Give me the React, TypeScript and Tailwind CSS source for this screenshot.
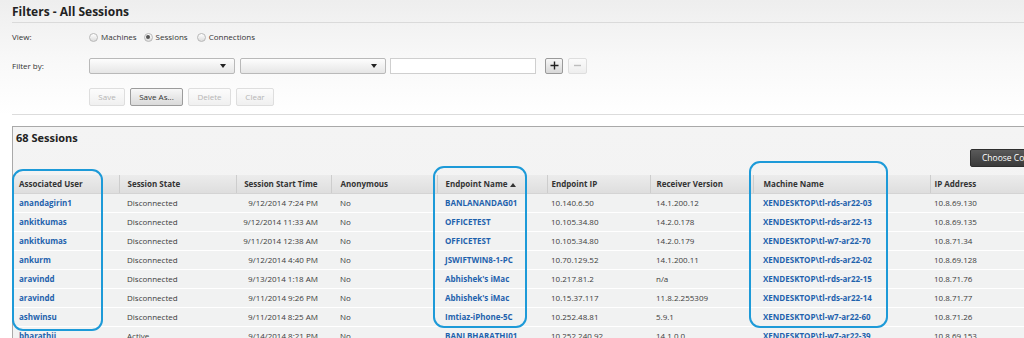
import React from "react";

const cols = [
  { name: "Associated User", w: "w-[105px]", pad: "pl-[5px]", link: true },
  { name: "Session State", w: "w-[117px]", pad: "pl-[8px]" },
  { name: "Session Start Time", w: "w-[95px]", pad: "pr-[13px] text-right" },
  { name: "Anonymous", w: "w-[106px]", pad: "pl-[9px]" },
  { name: "Endpoint Name", w: "w-[110px]", pad: "pl-[8px]", link: true, sort: true },
  { name: "Endpoint IP", w: "w-[103px]", pad: "pl-[4px]" },
  { name: "Receiver Version", w: "w-[103px]", pad: "pl-[6px]" },
  { name: "Machine Name", w: "w-[177px]", pad: "pl-[10px]", link: true },
  { name: "IP Address", w: "w-[100px]", pad: "pl-[4px]" },
];

const rows = [
  ["anandagirin1", "Disconnected", "9/12/2014 7:24 PM", "No", "BANLANANDAG01", "10.140.6.50", "14.1.200.12", "XENDESKTOP\\tl-rds-ar22-03", "10.8.69.130"],
  ["ankitkumas", "Disconnected", "9/12/2014 11:33 AM", "No", "OFFICETEST", "10.105.34.80", "14.2.0.178", "XENDESKTOP\\tl-rds-ar22-13", "10.8.69.135"],
  ["ankitkumas", "Disconnected", "9/11/2014 12:38 AM", "No", "OFFICETEST", "10.105.34.80", "14.2.0.179", "XENDESKTOP\\tl-w7-ar22-70", "10.8.71.34"],
  ["ankurm", "Disconnected", "9/12/2014 4:40 PM", "No", "JSWIFTWIN8-1-PC", "10.70.129.52", "14.1.200.11", "XENDESKTOP\\tl-rds-ar22-02", "10.8.69.128"],
  ["aravindd", "Disconnected", "9/13/2014 1:18 AM", "No", "Abhishek's iMac", "10.217.81.2", "n/a", "XENDESKTOP\\tl-rds-ar22-15", "10.8.71.76"],
  ["aravindd", "Disconnected", "9/11/2014 9:26 PM", "No", "Abhishek's iMac", "10.15.37.117", "11.8.2.255309", "XENDESKTOP\\tl-rds-ar22-14", "10.8.71.77"],
  ["ashwinsu", "Disconnected", "9/11/2014 8:25 AM", "No", "Imtiaz-iPhone-5C", "10.252.48.81", "5.9.1", "XENDESKTOP\\tl-w7-ar22-60", "10.8.71.26"],
  ["bharathii", "Active", "9/14/2014 8:21 PM", "No", "BANLBHARATHI01", "10.252.240.92", "14.1.0.0", "XENDESKTOP\\tl-w7-ar22-39", "10.8.69.153"],
];

function Radio({ checked }: { checked?: boolean }) {
  return (
    <span className="w-[9px] h-[9px] rounded-full border border-[#b8b8b8] bg-gradient-to-b from-[#ffffff] to-[#dcdcdc] flex items-center justify-center shrink-0">
      {checked && <span className="w-[4px] h-[4px] rounded-full bg-[#555]" />}
    </span>
  );
}

function Select() {
  return (
    <div className="w-[146px] h-[16px] border border-[#b9b9b9] rounded-[2px] bg-gradient-to-b from-[#fdfdfd] to-[#e6e6e6] flex items-center justify-end pr-[8px]">
      <svg width="6" height="4" viewBox="0 0 6 4"><path d="M0 0h6L3 4z" fill="#222" /></svg>
    </div>
  );
}

function Btn({ label, w, enabled }: { label: string; w: string; enabled?: boolean }) {
  return (
    <div
      className={
        "h-[18px] rounded-[2px] flex items-center justify-center text-[8px] " +
        w +
        (enabled
          ? " border border-[#9c9c9c] bg-gradient-to-b from-[#f7f7f7] to-[#dadada] text-[#333]"
          : " border border-[#dedede] bg-gradient-to-b from-[#fcfcfc] to-[#f0f0f0] text-[#b5b5b5]")
      }
    >
      {label}
    </div>
  );
}

export default function App() {
  return (
    <div className="w-[1024px] h-[338px] overflow-hidden relative bg-white font-['Open_Sans',sans-serif] text-[#444]">
      <div className="bg-gradient-to-b from-[#eeeeee] via-[#f8f8f8] to-white pl-3">
        <div className="h-[23px] pt-[4px] border-b border-[#dadada] text-[12px] font-bold text-[#222] leading-[16px]">
          Filters - All Sessions
        </div>
        <div className="mt-[5px] h-[18px] flex items-center text-[8px]">
          <div className="w-[77px] text-[#333]">View:</div>
          <div className="flex items-center gap-[3px]">
            <Radio />
            <span className="mr-[4px] text-[#333]">Machines</span>
            <Radio checked />
            <span className="mr-[6px] text-[#333]">Sessions</span>
            <Radio />
            <span className="text-[#333]">Connections</span>
          </div>
        </div>
        <div className="mt-[11px] h-[17px] flex items-center text-[8px]">
          <div className="w-[77px] text-[#333]">Filter by:</div>
          <Select />
          <div className="w-[5px]" />
          <Select />
          <div className="w-[4px]" />
          <div className="w-[146px] h-[16px] border border-[#cfcfcf] bg-white" />
          <div className="w-[9px]" />
          <div className="w-[18px] h-[16px] border border-[#9a9a9a] rounded-[2px] bg-gradient-to-b from-[#f7f7f7] to-[#d8d8d8] flex items-center justify-center">
            <svg width="9" height="9" viewBox="0 0 9 9"><path d="M4.5 0.5v8M0.5 4.5h8" stroke="#222" strokeWidth="1.4" /></svg>
          </div>
          <div className="w-[5px]" />
          <div className="w-[19px] h-[16px] border border-[#dedede] rounded-[2px] bg-gradient-to-b from-[#fbfbfb] to-[#eeeeee] flex items-center justify-center">
            <svg width="7" height="3" viewBox="0 0 7 3"><path d="M0 1.5h7" stroke="#bdbdbd" strokeWidth="1.4" /></svg>
          </div>
        </div>
        <div className="mt-[14px] h-[18px] flex items-center gap-[5px] pl-[77px]">
          <Btn label="Save" w="w-[36px]" />
          <Btn label="Save As..." w="w-[53px]" enabled />
          <Btn label="Delete" w="w-[43px]" />
          <Btn label="Clear" w="w-[38px]" />
        </div>
        <div className="h-[8px] border-b border-[#dcdcdc] box-content" />
      </div>

      <div className="mt-[11px] ml-3 border-t border-l border-[#a9a9a9] bg-gradient-to-b from-[#f4f4f4] to-[#f1f1f1]">
        <div className="h-[22px] pl-[3px] pt-[4px] text-[11px] font-bold text-[#222] leading-[14px]">68 Sessions</div>
        <div className="h-[18px] flex pl-[957px]">
          <div className="shrink-0 h-[18px] px-[11px] rounded-[2px] bg-gradient-to-b from-[#5a5a5a] to-[#3a3a3a] border border-[#2e2e2e] text-white text-[8.5px] flex items-center whitespace-nowrap">
            Choose Columns
          </div>
        </div>
        <div className="h-[8px]" />
        <table className="table-fixed border-collapse ml-[1px] w-[1016px] text-[8px]">
          <thead>
            <tr className="h-[18px] bg-gradient-to-b from-[#ececec] to-[#dedede]">
              {cols.map((c, i) => (
                <th
                  key={i}
                  className={
                    c.w + " " + c.pad + " text-left font-bold text-[#333] whitespace-nowrap border-r border-[#cdcdcd] border-b border-b-[#d4d4d4] p-0 text-[8px]" +
                    (c.pad.includes("text-right") ? " !text-right" : "")
                  }
                >
                  {c.name}
                  {c.sort && (
                    <svg className="inline-block ml-[3px] align-middle" width="6" height="4" viewBox="0 0 6 4"><path d="M0 4h6L3 0z" fill="#333" /></svg>
                  )}
                </th>
              ))}
            </tr>
          </thead>
          <tbody>
            {rows.map((r, ri) => (
              <tr key={ri} className="h-[19px] bg-[#f1f2f2] border-b border-white">
                {r.map((v, ci) => (
                  <td
                    key={ci}
                    className={
                      cols[ci].pad +
                      " p-0 whitespace-nowrap overflow-hidden " +
                      (cols[ci].link ? "font-bold text-[#1f62ad]" : "text-[#3c3c3c]")
                    }
                  >
                    {v}
                  </td>
                ))}
              </tr>
            ))}
          </tbody>
        </table>
      </div>

      <div className="absolute left-[12px] top-[169px] w-[91px] h-[162px] border-2 border-[#1d9ad8] rounded-[11px]" />
      <div className="absolute left-[433px] top-[166px] w-[94px] h-[162px] border-2 border-[#1d9ad8] rounded-[11px]" />
      <div className="absolute left-[749px] top-[161px] w-[139px] h-[167px] border-2 border-[#1d9ad8] rounded-[11px]" />
    </div>
  );
}
